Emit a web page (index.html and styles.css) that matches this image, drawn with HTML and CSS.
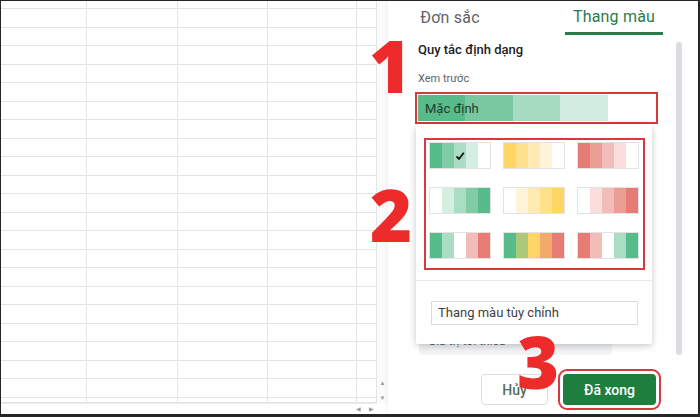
FILE: index.html
```html
<!DOCTYPE html>
<html lang="vi">
<head>
    <meta charset="UTF-8">
    <meta name="viewport" content="width=device-width, initial-scale=1.0">
    <title>Định dạng có điều kiện - Thang màu</title>
    <link rel="stylesheet" href="styles.css">
</head>
<body>
    <div class="frame">
        <div class="sheet">
            <div class="grid" id="grid"></div>
            <div class="vscroll">
                <span class="arrow">&#9650;</span>
                <span class="arrow">&#9660;</span>
            </div>
            <div class="hscroll">
                <span class="arrow">&#9664;</span>
                <span class="arrow">&#9654;</span>
            </div>
        </div>

        <aside class="panel">
            <div class="tabs">
                <div class="tab">Đơn sắc</div>
                <div class="tab active">Thang màu</div>
            </div>

            <div class="panel-body">
                <div class="content">
                    <div class="title">Quy tắc định dạng</div>
                    <div class="label">Xem trước</div>
                    <div class="preview">
                        <span class="preview-text">Mặc định</span>
                    </div>
                    <div class="field">Giá trị tối thiểu</div>

                    <div class="dropdown">
                        <div class="swatch-area">
                            <div class="swatches" id="swatches"></div>
                        </div>
                        <div class="custom">
                            <div class="custom-input">Thang màu tùy chỉnh</div>
                        </div>
                    </div>
                </div>
                <div class="scrollbar"></div>
            </div>

            <div class="actions">
                <button class="btn btn-cancel">Hủy</button>
                <button class="btn btn-done">Đã xong</button>
            </div>
        </aside>

        <span class="mark mark-1">1</span>
        <span class="mark mark-2">2</span>
        <span class="mark mark-3">3</span>
    </div>

    <script>
        // spreadsheet cells
        const grid = document.getElementById('grid');
        for (let i = 0; i < 23 * 5; i++) {
            const cell = document.createElement('div');
            cell.className = 'cell';
            grid.appendChild(cell);
        }

        // colour scale presets
        const G = ['#57bb8a', '#81cca7', '#abddc4', '#d5eee2', '#ffffff'];
        const Y = ['#ffd666', '#ffe08c', '#ffeab2', '#fff4d9', '#ffffff'];
        const R = ['#e67c73', '#ec9d96', '#f2bdb9', '#f9dedc', '#ffffff'];
        const presets = [
            G, Y, R,
            [...G].reverse(), [...Y].reverse(), [...R].reverse(),
            ['#57bb8a', '#abddc4', '#ffffff', '#f2bdb9', '#e67c73'],
            ['#57bb8a', '#abc978', '#ffd666', '#f3a96c', '#e67c73'],
            ['#e67c73', '#f2bdb9', '#ffffff', '#abddc4', '#57bb8a']
        ];

        const swatches = document.getElementById('swatches');
        presets.forEach((colors, i) => {
            const swatch = document.createElement('div');
            swatch.className = 'swatch';
            colors.forEach((c, j) => {
                const stripe = document.createElement('span');
                stripe.className = 'stripe';
                stripe.style.background = c;
                if (i === 0 && j === 2) {
                    stripe.innerHTML = '<svg class="check" viewBox="0 0 10 10"><path d="M1.5 5.5 L4 8 L8.8 1.8" /></svg>';
                }
                swatch.appendChild(stripe);
            });
            swatches.appendChild(swatch);
        });
    </script>
</body>
</html>
```

FILE: styles.css
```css
* {
    margin: 0;
    padding: 0;
    box-sizing: border-box;
}

body {
    font-family: 'Roboto', 'Liberation Sans', sans-serif;
    background: #fff;
    color: #202124;
}

.frame {
    position: relative;
    width: 700px;
    height: 417px;
    display: flex;
    overflow: hidden;
    background: #fff;
    border: solid #262626;
    border-width: 1px 2px 3px 1px;
}

/* ---------- sheet ---------- */

.sheet {
    width: 387px;
    display: grid;
    grid-template-columns: 376px 11px;
    grid-template-rows: 402px 11px;
}

.grid {
    display: grid;
    grid-template-columns: 86px 91px 90px 89px 20px;
    grid-template-rows: 8px repeat(21, 18.52px) 1fr;
    overflow: hidden;
}

.cell {
    border-right: 1px solid #e4e4e4;
    border-bottom: 1px solid #e4e4e4;
}

.vscroll {
    display: flex;
    flex-direction: column;
    justify-content: flex-end;
    align-items: center;
    gap: 7px;
    padding-bottom: 1px;
    background: #fbfbfb;
}

.hscroll {
    display: flex;
    justify-content: flex-end;
    align-items: center;
    gap: 8px;
    padding-right: 3px;
    border-top: 1px solid #ececec;
}

.arrow {
    font-size: 6px;
    color: #9a9a9a;
    line-height: 8px;
}

/* ---------- side panel ---------- */

.panel {
    flex: 1;
    display: flex;
    flex-direction: column;
    box-shadow: -2px 0 4px rgba(0, 0, 0, 0.04);
}

.tabs {
    height: 34px;
    display: flex;
    gap: 66px;
    padding-left: 13px;
}

.tab {
    width: 98px;
    text-align: center;
    font-size: 16px;
    line-height: 34px;
    color: #5f6368;
    letter-spacing: 0.2px;
}

.tab.active {
    color: #2b7a4b;
    border-bottom: 3px solid #2b7a4b;
    line-height: 31px;
}

.panel-body {
    flex: 1;
    display: flex;
    padding-left: 30px;
}

.content {
    position: relative;
    width: 237px;
}

.title {
    margin-top: 7px;
    font-size: 13px;
    line-height: 16px;
    font-weight: 500;
}

.label {
    margin-top: 14px;
    font-size: 11px;
    line-height: 14px;
    color: #5f6368;
}

.preview {
    margin-top: 9px;
    height: 26px;
    display: flex;
    align-items: center;
    padding-left: 7px;
    background: linear-gradient(90deg,
        #57bb8a 0 20%, #79c8a1 20% 40%, #a6dbbf 40% 60%, #d2ecdf 60% 80%, #fff 80%);
    outline: 2px solid #d7393f;
    outline-offset: 1px;
}

.preview-text {
    font-size: 13px;
    color: #1f3d2c;
}

.field {
    margin-top: 207px;
    margin-left: 1px;
    width: 193px;
    height: 27px;
    padding: 6px 9px;
    border-radius: 4px;
    background: #f1f3f4;
    font-size: 12px;
    color: #5f6368;
}

.scrollbar {
    width: 6px;
    height: 313px;
    margin: 7px 0 0 21px;
    background: #dadce0;
    border-radius: 3px;
}

/* ---------- dropdown menu ---------- */

.dropdown {
    position: absolute;
    top: 89px;
    left: -2px;
    width: 236px;
    height: 220px;
    background: #fff;
    border-radius: 2px;
    box-shadow: 0 2px 7px rgba(0, 0, 0, 0.22);
}

.swatch-area {
    padding: 14px 7px 10px 8px;
}

.swatches {
    display: grid;
    grid-template-columns: repeat(3, 62px);
    grid-auto-rows: 27px;
    column-gap: 12px;
    row-gap: 18px;
    padding: 2px 4px 9px 3px;
    border: 2px solid #d7393f;
}

.swatch {
    display: flex;
    border: 1px solid #e3e3e3;
}

.stripe {
    flex: 1;
    display: flex;
    align-items: center;
    justify-content: center;
}

.check {
    width: 10px;
    height: 10px;
    fill: none;
    stroke: #111;
    stroke-width: 1.8;
}

.custom {
    border-top: 1px solid #e8eaed;
    padding: 20px 14px 0 15px;
}

.custom-input {
    height: 24px;
    padding-left: 6px;
    border: 1px solid #dadce0;
    font-size: 13px;
    line-height: 22px;
    color: #3c4043;
}

/* ---------- buttons ---------- */

.actions {
    height: 57px;
    display: flex;
    justify-content: flex-end;
    align-items: flex-end;
    gap: 15px;
    padding: 0 42px 9px 0;
}

.btn {
    height: 31px;
    border-radius: 4px;
    font-family: inherit;
    font-size: 14px;
    font-weight: 500;
}

.btn-cancel {
    width: 67px;
    background: #fff;
    border: 1px solid #dadce0;
    color: #52705c;
}

.btn-done {
    width: 93px;
    background: #1e7e3e;
    border: none;
    color: #fff;
    outline: 2px solid #d7393f;
    outline-offset: 3px;
}

/* ---------- annotation numbers ---------- */

.mark {
    position: absolute;
    font-family: 'Open Sans', sans-serif;
    font-weight: 800;
    font-size: 72px;
    line-height: 0.8;
    color: #ee2b2b;
}

.mark-1 {
    top: 36px;
    left: 368px;
}

.mark-2 {
    top: 185px;
    left: 369px;
}

.mark-3 {
    top: 332px;
    left: 516px;
}
```
